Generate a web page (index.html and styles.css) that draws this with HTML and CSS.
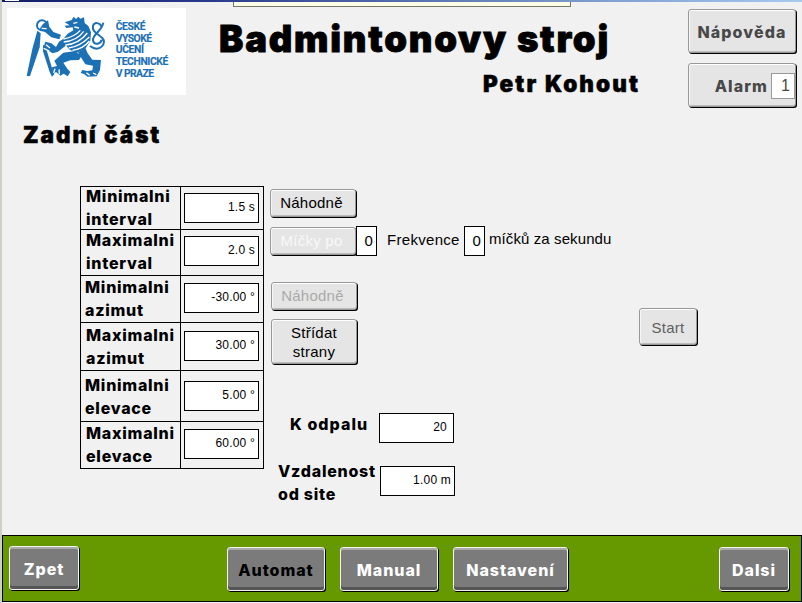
FILE: index.html
```html
<!DOCTYPE html>
<html lang="cs">
<head>
<meta charset="utf-8">
<title>Badmintonovy stroj</title>
<link rel="stylesheet" href="styles.css">
</head>
<body>
<div class="screen">
  <div class="titlebar"><i class="titlebar-icon"></i><i class="tooltip-edge"></i></div>
  <header class="header">
    <svg class="logo" viewBox="21 24 537 261">
      <g transform="translate(72 42)" fill="#1c70b4" stroke="none">
        <path d="M40 50 L50 58 L47 100 L18 186 L8 186 L25 105 Z"/>
        <path d="M57 92 L66 102 L90 182 L84 188 L77 174 L57 112 Z"/>
        <circle cx="54" cy="34" r="15" fill="none" stroke="#1c70b4" stroke-width="6"/>
        <path d="M57 30 L72 19 L76 38 L88 54 L111 62 L106 76 L82 70 L63 54 L50 50 L48 43 Z"/>
        <path d="M64 83 L82 88 L96 99 L105 83 L122 72 L134 84 L124 96 L102 113 L86 118 L58 101 Z"/>
        <path d="M122 25 L143 18 L149 8 L156 15 L163 8 L169 14 L180 10 L182 27 L193 36 L201 55 L199 80 L184 104 L157 117 L135 106 L115 78 L131 59 L148 49 L146 40 L127 42 L122 35 L137 34 Z"/>
        <path d="M118 116 L149 112 L174 124 L165 138 L139 139 L118 146 L130 164 L139 174 L131 187 L119 179 L109 185 L96 174 L85 183 L84 160 L99 156 L91 140 Z"/>
        <path d="M162 115 L184 102 L191 118 L205 137 L231 138 L228 168 L218 187 L191 188 L180 180 L170 177 L175 168 L190 171 L205 169 L207 155 L184 151 L174 135 Z"/>
        <path d="M198 96 C227 118 250 87 235 72 C220 58 203 52 207 36 C211 23 228 25 233 39 M238 26 C234 52 205 60 207 79 C210 95 230 91 233 77" fill="none" stroke="#1c70b4" stroke-width="6"/>
        <g fill="none" stroke="#fff" stroke-width="4">
          <path d="M118 75 C146 70 158 61 169 49 M119 84 C150 81 167 69 179 52 M124 93 C151 91 174 78 190 57 M134 102 C158 99 179 86 196 69 M145 109 C166 106 184 97 196 81"/>
          <path d="M151 39 L165 42 M148 28 L160 25 M53 43 L68 44 M66 92 L78 102 M59 103 L76 111 M93 164 L89 177 M105 166 L106 181 M187 176 L197 184 M207 177 L217 182"/>
        </g>
      </g>
      <g class="logo-text">
        <text x="347" y="89" textLength="90">ČESKÉ</text>
        <text x="347" y="125" textLength="109">VYSOKÉ</text>
        <text x="347" y="160" textLength="85">UČENÍ</text>
        <text x="347" y="196" textLength="158">TECHNICKÉ</text>
        <text x="347" y="231" textLength="115">V PRAZE</text>
      </g>
    </svg>
    <div class="titles">
      <h1>Badmintonovy stroj</h1>
      <p class="author">Petr Kohout</p>
    </div>
    <div class="side">
      <button class="btn btn-side">Nápověda</button>
      <button class="btn btn-side alarm">Alarm<span class="count">1</span></button>
    </div>
  </header>
  <h2>Zadní část</h2>
  <main class="main">
    <div class="params">
      <div class="row r1"><label>Minimalni<br>interval</label><div class="cell"><span class="field">1.5 s</span></div></div>
      <div class="row r2"><label>Maximalni<br>interval</label><div class="cell"><span class="field">2.0 s</span></div></div>
      <div class="row r3"><label>Minimalni<br>azimut</label><div class="cell"><span class="field">-30.00 °</span></div></div>
      <div class="row r4"><label>Maximalni<br>azimut</label><div class="cell"><span class="field">30.00 °</span></div></div>
      <div class="row r5"><label>Minimalni<br>elevace</label><div class="cell"><span class="field">5.00 °</span></div></div>
      <div class="row r6"><label>Maximalni<br>elevace</label><div class="cell"><span class="field">60.00 °</span></div></div>
    </div>
    <div class="controls">
      <button class="btn mode">Náhodně</button>
      <div class="frequency">
        <button class="btn mode faded">Míčky po</button><span class="field digit">0</span>
        <span class="freq-label">Frekvence</span><span class="field digit">0</span><span class="freq-unit">míčků za sekundu</span>
      </div>
      <button class="btn mode disabled">Náhodně</button>
      <button class="btn mode tall">Střídat<br>strany</button>
      <div class="setting shots"><label>K odpalu</label><span class="field">20</span></div>
      <div class="setting distance"><label>Vzdalenost<br>od site</label><span class="field">1.00 m</span></div>
    </div>
    <button class="btn start">Start</button>
  </main>
  <footer class="footer">
    <button class="nav back">Zpet</button>
    <button class="nav automat">Automat</button>
    <button class="nav manual">Manual</button>
    <button class="nav settings">Nastavení</button>
    <button class="nav next">Dalsi</button>
  </footer>
</div>
</body>
</html>
```
FILE: styles.css
```css
* { box-sizing: border-box; }
body { margin: 0; background: #fff; font-family: "Liberation Sans", Arial, sans-serif; color: #000; }
button { font-family: inherit; padding: 0; margin: 0; }
h1, h2, p { margin: 0; }
.screen { width: 802px; height: 603px; overflow: hidden; background: #f1f1f1; border-left: 2px solid #cfcfc5; display: flex; flex-direction: column; }
.titlebar { position: relative; flex: none; height: 2px; background: linear-gradient(90deg, #101c68, #28388c 25%, #6684bc 60%, #a6caf0); }
.titlebar-icon { position: absolute; left: 3px; top: 0; width: 14px; height: 1px; background: #fff; }
.tooltip-edge { position: absolute; left: 231px; top: 2px; width: 338px; height: 5px; background: #ffffe8; border: 1px solid #77776c; border-top: 0; }

h1, h2, .author, label, .btn-side, .nav { font-family: Inter, "Liberation Sans", sans-serif; font-weight: 900; }

.header { flex: none; height: 112px; display: flex; align-items: flex-start; }
.logo { width: 179px; height: 87px; margin: 6px 0 0 5px; background: #fff; flex: none; }
.logo-text { font: bold 31px Roboto, sans-serif; fill: #1c70b4; stroke: #1c70b4; stroke-width: .5px; }
.titles { width: 453px; margin-left: 33px; flex: none; }
h1 { font-size: 36.5px; line-height: 42px; letter-spacing: 1.75px; margin-top: 16px; white-space: nowrap; -webkit-text-stroke: .8px #000; }
.author { font-size: 22.5px; line-height: 26px; letter-spacing: 2.1px; margin: 11px 0 0 264px; white-space: nowrap; -webkit-text-stroke: .5px #000; }
.side { display: flex; flex-direction: column; gap: 10px; margin: 7px 0 0 16px; }

.btn { display: flex; align-items: center; justify-content: center; background: #e5e5e5; border: 1px solid #999; border-radius: 3px; box-shadow: inset 0 1px #fff, inset 1px 0 #f6f6f6, inset 0 -1px #bbb, 1px 1px #000; font-size: 15px; line-height: 20px; letter-spacing: .25px; color: #000; }
.btn-side { width: 108px; height: 44px; font-weight: 800; font-size: 16px; letter-spacing: 1.1px; color: #484848; }
.btn-side:first-child { padding-top: 2px; }
.alarm { justify-content: flex-end; padding-top: 2px; }
.count { width: 24px; height: 26px; margin-left: 3px; margin-top: -1px; border: 1px solid #999; background: #fff; font-family: "Liberation Sans", sans-serif; font-size: 16px; font-weight: normal; line-height: 24px; text-align: right; padding-right: 3px; }
h2 { flex: none; height: 71px; font-size: 22.5px; line-height: 26px; padding: 8px 0 0 21px; letter-spacing: 1.95px; -webkit-text-stroke: .5px #000; }

.main { flex: none; height: 350px; display: flex; align-items: flex-start; padding-left: 78px; }
.params { width: 184px; margin-top: 1px; border: solid #000; border-width: 0 1px 1px; flex: none; }
.row { display: flex; border-top: 1px solid #000; }
label { font-size: 16px; font-weight: 850; line-height: 23px; letter-spacing: .75px; white-space: nowrap; }
.row label { width: 99px; flex: none; padding-left: 5px; margin-top: -2px; margin-bottom: -4px; }
.cell { width: 83px; border-left: 1px solid #000; padding: 6px 0 0 3px; }
.field { display: block; width: 75px; height: 30px; border: 1px solid #000; background: #fff; text-align: right; padding-right: 3px; font-size: 12px; line-height: 27px; letter-spacing: .2px; }
.r1 { height: 43px; }
.r2 { height: 46px; }
.r3 { height: 47px; }
.r4 { height: 48px; }
.r5 { height: 51px; }
.r6 { height: 47px; }
.row.r2 label { margin-top: -1px; }
.row.r3 label, .row.r6 label { margin-top: 0; }
.row.r4 label { margin-top: 1px; }
.row.r5 label { margin-top: 3px; }
.r3 .cell, .r6 .cell { padding-top: 7px; }
.r4 .cell { padding-top: 8px; }
.r5 .cell { padding-top: 10px; }
.row.r3 label, .row.r5 label { padding-left: 4px; }

.controls { width: 346px; margin: 4px 0 0 6px; flex: none; }
.mode { width: 86px; height: 28px; padding-right: 3px; }
.frequency { display: flex; align-items: flex-start; margin-top: 9px; white-space: nowrap; }
.frequency .mode { margin-top: 1px; }
.faded { color: #f8f8f8; }
.disabled { color: #aaa; margin: 26px 0 0 1px; }
.tall { height: 45px; margin: 9px 0 0 1px; padding: 0; line-height: 19px; }
.digit { width: 21px; font-size: 15px; line-height: 27px; padding-right: 3px; }
.freq-label, .freq-unit { font-size: 15px; line-height: 27px; letter-spacing: .3px; }
.freq-label { width: 77px; margin-left: 10px; }
.freq-unit { line-height: 25px; margin-left: 4px; letter-spacing: .1px; }
.setting { display: flex; }
.shots { margin: 49px 0 0 20px; }
.shots label { width: 89px; letter-spacing: 1.05px; }
.shots .field { padding-right: 6px; }
.distance { margin: 17px 0 0 8px; }
.distance label { width: 102px; }
.distance .field { margin-top: 6px; }
.start { width: 58px; height: 37px; margin: 123px 0 0 23px; color: #606060; padding-top: 2px; }

.footer { flex: none; height: 67px; background: #669900; border: 1px solid #000; display: flex; align-items: flex-start; padding: 11px 0 0 6px; }
.nav { height: 44px; border: 1px solid #f4f4ec; border-radius: 3px; background: #7b7b7b; box-shadow: inset 0 2px #aaa, inset 0 -3px #555, 1px 1px #000; color: #fff; font-size: 16px; font-weight: 800; letter-spacing: .95px; padding-top: 2px; }
.back { width: 70px; margin-top: -1px; }
.automat { width: 98px; margin-left: 148px; color: #000; }
.manual { width: 98px; margin-left: 15px; }
.settings { width: 115px; margin-left: 15px; }
.next { width: 70px; margin-left: 151px; }
```
